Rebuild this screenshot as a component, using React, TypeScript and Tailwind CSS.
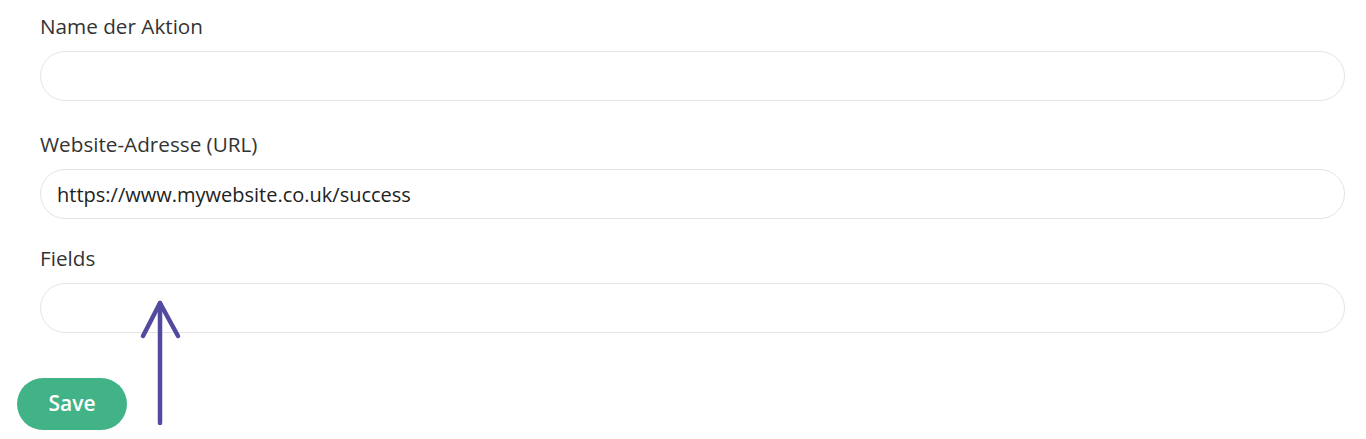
export default function App() {
  const font = { fontFamily: '"Open Sans", "Noto Sans", sans-serif' };

  return (
    <div className="relative w-[1366px] h-[439px] bg-white overflow-hidden" style={font}>
      <div className="pl-[40px] pr-[21px] pt-[12px]">
        {/* Name der Aktion */}
        <label className="block text-[20.7px] leading-[28px] text-[#333] mb-[11px]">Name der Aktion</label>
        <input
          className="block w-full h-[50px] rounded-full border border-[#e4e4e4] bg-white px-4 text-[20px] text-[#222] outline-none"
          defaultValue=""
        />

        {/* Website-Adresse */}
        <label className="block text-[20.7px] leading-[28px] text-[#333] mt-[29px] mb-[11px]">Website-Adresse (URL)</label>
        <input
          className="block w-full h-[50px] rounded-full border border-[#e4e4e4] bg-white px-4 text-[20px] text-[#222] outline-none"
          defaultValue="https://www.mywebsite.co.uk/success"
        />

        {/* Fields */}
        <label className="block text-[20.7px] leading-[28px] text-[#333] mt-[25px] mb-[11px]">Fields</label>
        <input
          className="block w-full h-[50px] rounded-full border border-[#e4e4e4] bg-white px-4 text-[20px] text-[#222] outline-none"
          defaultValue=""
        />
      </div>

      <div className="pl-[17px] mt-[45px]">
        <button className="w-[110px] h-[52px] rounded-full bg-[#41b387] text-white text-[21px] font-semibold">
          Save
        </button>
      </div>

      {/* annotation arrow */}
      <svg className="absolute left-[136px] top-[296px]" width="50" height="134" viewBox="0 0 50 134">
        <g stroke="#524a9f" strokeWidth="4.5" strokeLinecap="round" strokeLinejoin="round" fill="none">
          <line x1="24" y1="7" x2="24" y2="127" />
          <polyline points="7,40 24,7 42,40" />
        </g>
      </svg>
    </div>
  );
}
